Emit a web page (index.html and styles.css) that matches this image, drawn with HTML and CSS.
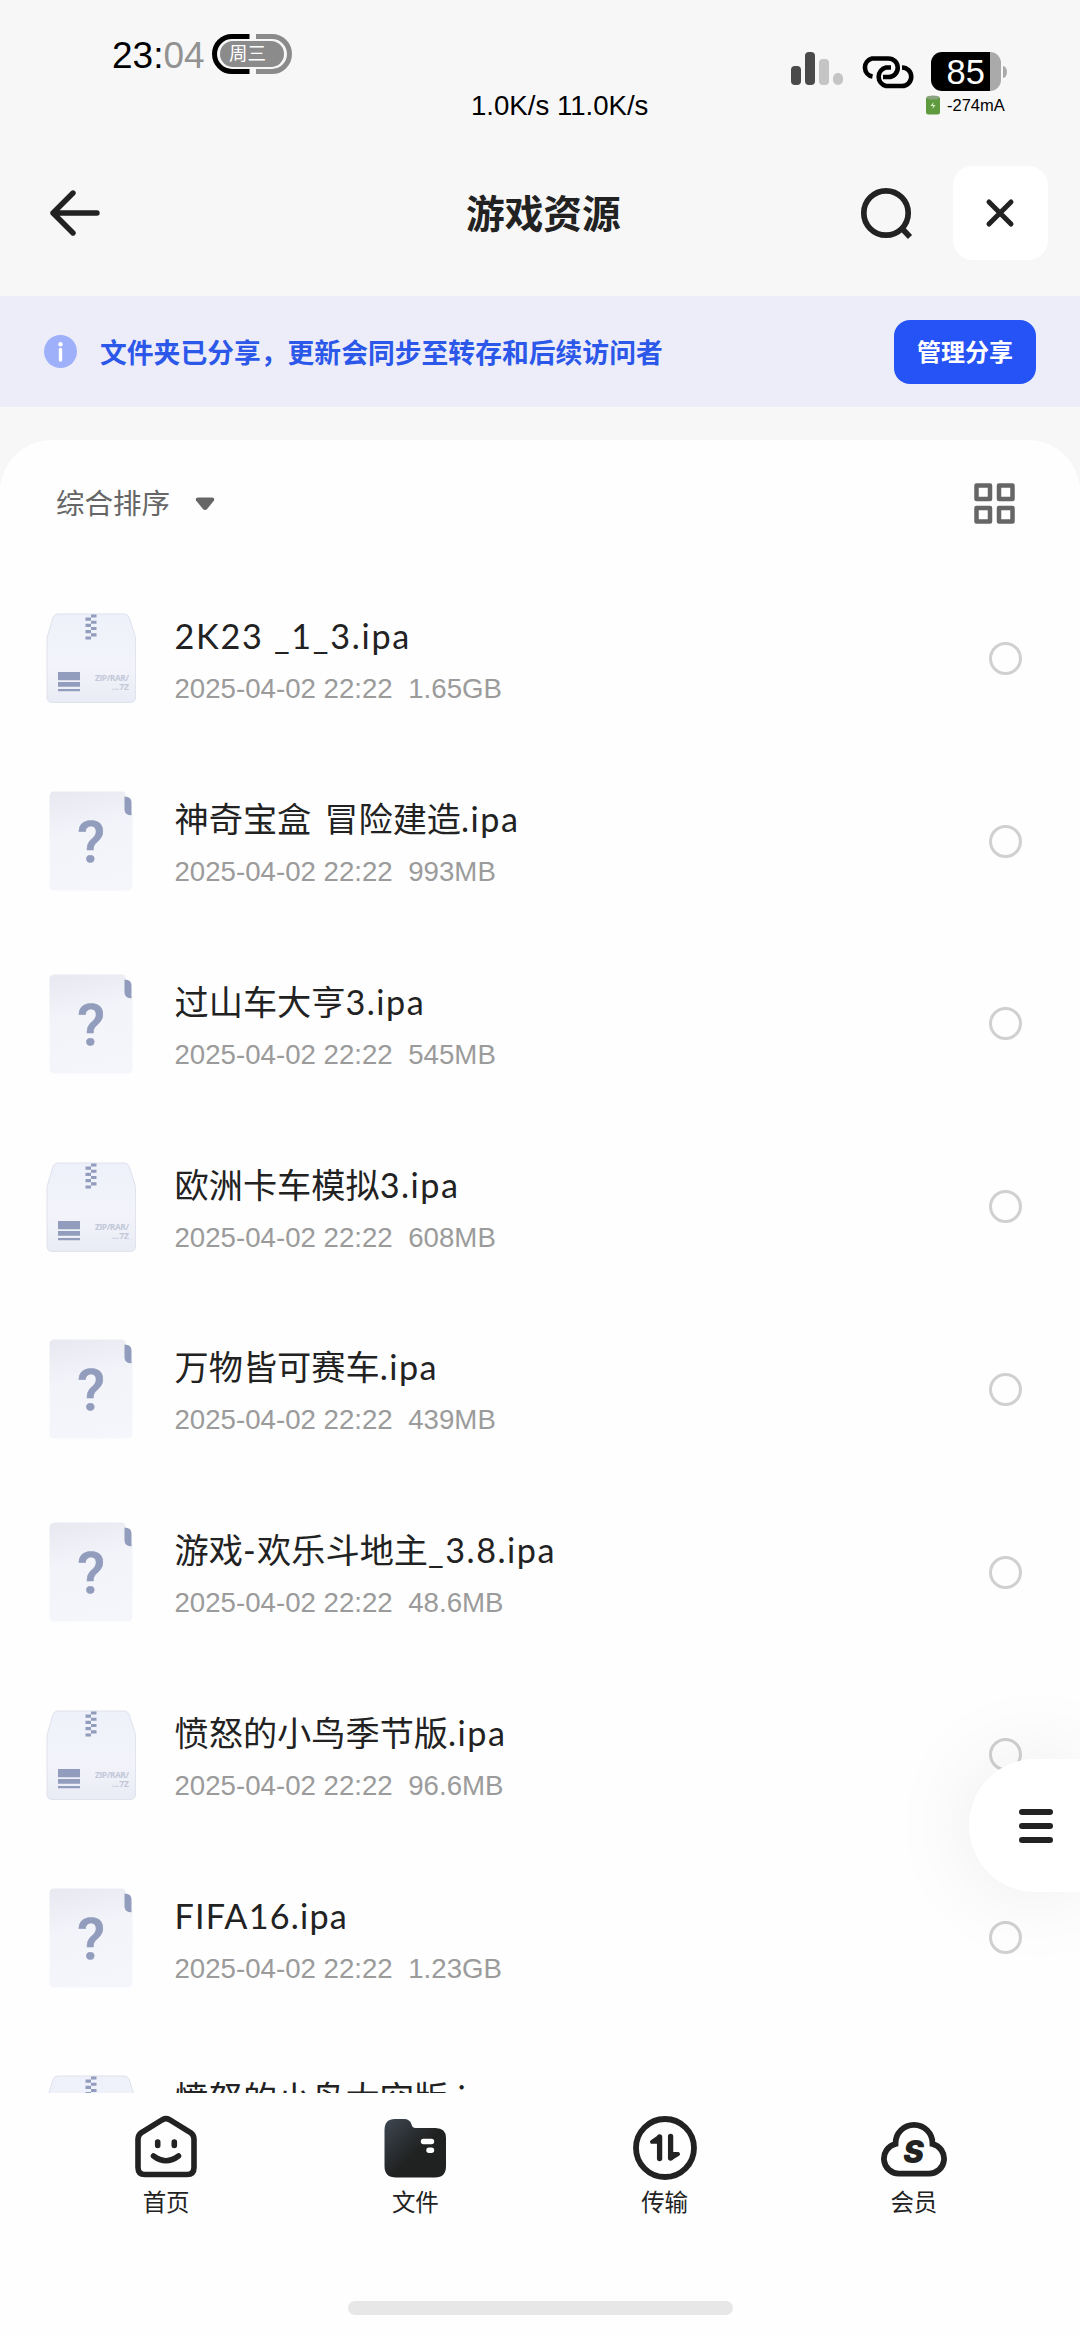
FILE: index.html
```html
<!DOCTYPE html>
<html lang="zh-CN">
<head>
<meta charset="utf-8">
<title>游戏资源</title>
<link rel="stylesheet" href="styles.css">
</head>
<body>
<svg width="0" height="0" class="defs" aria-hidden="true">
  <defs>
    <linearGradient id="paper" x1="0.3" y1="0" x2="0.5" y2="1"><stop offset="0" stop-color="#e9eaf1"/><stop offset=".4" stop-color="#f3f4fa"/><stop offset="1" stop-color="#f4f6fc"/></linearGradient>
    <linearGradient id="box" x1="0" y1="0" x2="0" y2="1"><stop offset="0" stop-color="#eef1fa"/><stop offset=".6" stop-color="#f3f4fa"/><stop offset="1" stop-color="#e9ebf5"/></linearGradient>
    <linearGradient id="folder" x1="0" y1="0.1" x2="0.5" y2="0.6"><stop offset="0" stop-color="#3b444e"/><stop offset="1" stop-color="#202121"/></linearGradient>
    <symbol id="zip" viewBox="0 0 90 90">
      <path d="M12 1h66q4 0 5.300 3.800l5.700 18q.6 2 .6 4.200v57q0 5.500-5.500 5.500H6.500Q1 89.500 1 84V27q0-2.200.6-4.200L6.900 4.700Q8.300 1 12 1z" fill="url(#box)" stroke="#dfe2ec" stroke-width="1"/>
      <path d="M45 1.500h5.500v3H45zM39.500 4.500H45v3.200h-5.500zM45 7.700h5.500v3.100H45zM39.500 10.800H45v3.200h-5.500zM45 14h5.500v3.100H45zM39.500 17.100H45v3.200h-5.500zM45 20.300h5.500v3.100H45zM39.500 23.400H45v3.200h-5.500z" fill="#929cbc"/>
      <path d="M12 59h22v8.300H12zM12 69h22v4.800H12zM12 76h22v2.300H12z" fill="#929cbc"/>
      <text x="83" y="68" text-anchor="end" class="zip-text" textLength="34">ZIP/RAR/</text>
      <text x="83" y="77" text-anchor="end" class="zip-text" textLength="17">...7Z</text>
    </symbol>
    <symbol id="unknown" viewBox="0 0 90 100">
      <path d="M8.500.5H76q3.500 0 3.500 3.500v12q0 6 7 6v72q0 5.500-5.500 5.500H8.500q-5 0-5-5V5.500q0-5 5-5z" fill="url(#paper)"/>
      <path d="M78.500 5.500q7 0 7 6v12.700q-7 0-7-6z" fill="#929cbc"/>
      <text x="45" y="70.500" text-anchor="middle" class="mark">?</text>
    </symbol>
  </defs>
</svg>

<header class="status">
  <div class="clock">23:<span>04</span></div>
  <div class="day">
    <svg class="day-ring" width="80" height="40" viewBox="0 0 80 40"><path d="M37.500 2.500H20a17.500 17.500 0 0 0 0 35h17.500" fill="none" stroke="#000" stroke-width="5"/><path d="M44 2.500h16a17.500 17.500 0 0 1 0 35H44" fill="none" stroke="#8b8b8b" stroke-width="5"/></svg>
    <span class="day-name">周三</span>
  </div>
  <div class="speed">1.0K/s 11.0K/s</div>
  <svg class="signal" width="52" height="33" viewBox="0 0 52 33"><g fill="#4a4a4a"><rect y="14" width="10" height="19" rx="4"/><rect x="14" width="10" height="33" rx="4"/></g><g fill="#c5c5c5"><rect x="28" y="7" width="10" height="26" rx="4"/><rect x="42" y="21" width="10" height="12" rx="5"/></g></svg>
  <svg class="link" width="54" height="33" viewBox="0 0 54 33" fill="none" stroke="#000" stroke-width="4.600"><path d="M12.500 20.500A9.200 9.200 0 0 1 12 2.500h16.500a9.200 9.200 0 0 1 0 18.500H23"/><path d="M31 11.500h-5a9.500 9.500 0 0 0 0 18.500h16a9.200 9.200 0 0 0 0-18.500"/></svg>
  <div class="power">
    <div class="battery"><div class="level">85</div><i></i></div>
    <div class="current"><svg width="14" height="20" viewBox="0 0 14 20"><rect y="1.500" width="14" height="18" rx="2.500" fill="#5f9a3f"/><ellipse cx="7" cy="2.500" rx="6.500" ry="2" fill="#8ba380"/><path d="M7.500 7 4.500 11H7l-.5 3 3-4H7z" fill="#d8ecc9"/></svg><span>-274mA</span></div>
  </div>
</header>

<nav class="titlebar">
  <svg class="back" width="52" height="46" viewBox="0 0 52 46" fill="none" stroke="#222" stroke-width="5.400" stroke-linecap="round" stroke-linejoin="round"><path d="M24 3 4 23l20 20M4 23h44"/></svg>
  <h1>游戏资源</h1>
  <svg class="search" width="54" height="54" viewBox="0 0 54 54" fill="none" stroke="#222" stroke-width="5.700"><circle cx="26" cy="27" r="22.200"/><path d="m42 42.500 8 8.500"/></svg>
  <button class="close"><svg width="30" height="30" viewBox="0 0 30 30" stroke="#222" stroke-width="5" stroke-linecap="round"><path d="m4 4 22 22M26 4 4 26"/></svg></button>
</nav>

<section class="banner">
  <svg width="33" height="33" viewBox="0 0 33 33"><circle cx="16.500" cy="16.500" r="16.500" fill="#9db0f9"/><circle cx="16.500" cy="9.300" r="2.200" fill="#fff"/><path d="M16.500 14.500V25" stroke="#fff" stroke-width="3.400" stroke-linecap="round"/></svg>
  <p>文件夹已分享，更新会同步至转存和后续访问者</p>
  <button class="manage">管理分享</button>
</section>

<main class="panel">
  <div class="toolbar">
    <span class="sort">综合排序</span>
    <svg width="20" height="14" viewBox="0 0 20 14"><path d="M3 .5h14q3 0 2 3l-6.500 8q-2.500 3-5 0L1 3.500Q0 .5 3 .5z" fill="#666"/></svg>
    <svg class="grid" width="41" height="41" viewBox="0 0 41 41" fill="none" stroke="#666" stroke-width="4.500" stroke-linejoin="round"><path d="M2.500 2.500h13.500v13.500H2.500zM25 2.500h13.500v13.500H25zM2.500 25h13.500v13.500H2.500zM25 25h13.500v13.500H25z"/></svg>
  </div>
  <ul class="files">
    <li><svg class="icon-zip"><use href="#zip"/></svg><div class="info"><b class="n1">2K23 _1_3.ipa</b><small>2025-04-02 22:22<em>1.65GB</em></small></div><i class="radio"></i></li>
    <li><svg class="icon-file"><use href="#unknown"/></svg><div class="info"><b>神奇宝盒<s></s>冒险建造<span>.ipa</span></b><small>2025-04-02 22:22<em>993MB</em></small></div><i class="radio"></i></li>
    <li><svg class="icon-file"><use href="#unknown"/></svg><div class="info"><b>过山车大亨<span>3.ipa</span></b><small>2025-04-02 22:22<em>545MB</em></small></div><i class="radio"></i></li>
    <li><svg class="icon-zip"><use href="#zip"/></svg><div class="info"><b>欧洲卡车模拟<span>3.ipa</span></b><small>2025-04-02 22:22<em>608MB</em></small></div><i class="radio"></i></li>
    <li><svg class="icon-file"><use href="#unknown"/></svg><div class="info"><b>万物皆可赛车<span>.ipa</span></b><small>2025-04-02 22:22<em>439MB</em></small></div><i class="radio"></i></li>
    <li><svg class="icon-file"><use href="#unknown"/></svg><div class="info"><b>游戏<span>-</span>欢乐斗地主<span>_3.8.ipa</span></b><small>2025-04-02 22:22<em>48.6MB</em></small></div><i class="radio"></i></li>
    <li><svg class="icon-zip"><use href="#zip"/></svg><div class="info"><b>愤怒的小鸟季节版<span>.ipa</span></b><small>2025-04-02 22:22<em>96.6MB</em></small></div><i class="radio"></i></li>
    <li><svg class="icon-file"><use href="#unknown"/></svg><div class="info"><b><span class="tight">FIFA16.ipa</span></b><small>2025-04-02 22:22<em>1.23GB</em></small></div><i class="radio"></i></li>
    <li><svg class="icon-zip"><use href="#zip"/></svg><div class="info"><b>愤怒的小鸟太空版<span>.ipa</span></b></div></li>
  </ul>
</main>

<footer class="tabs">
  <a><svg width="66" height="66" viewBox="0 0 66 66" fill="none" stroke="#222" stroke-width="5.600"><path d="M29.500 5.700 8.500 18.500Q5 21 5 25v28.500q0 7 7 7h42q7 0 7-7V25q0-4-3.500-6.500L36.500 5.700q-3.500-2-7 0z"/><path d="M24.700 28v3.500M41.300 28v3.500M20.500 42q12.500 9.500 25 0" stroke-linecap="round"/></svg>首页</a>
  <a><svg width="66" height="66" viewBox="0 0 66 66"><path d="M13 5h9q6 0 7.500 5.500 1 3.500 4 3.500h20Q64 14 64 24v28q0 11.500-11 11.500H14Q2.500 63.500 2.500 52V16Q2.500 5 13 5z" fill="url(#folder)"/><path d="M41.500 27.500h8M47 36.300h2.500" stroke="#fff" stroke-width="5.400" stroke-linecap="round"/></svg>文件</a>
  <a><svg width="66" height="66" viewBox="0 0 66 66" fill="none" stroke="#222"><circle cx="33" cy="34" r="29" stroke-width="5.800"/><path d="M27.600 23v21.500" stroke-width="5.300" stroke-linecap="round"/><path d="m26.500 23.500-6.500 4.300h6M39.500 44l6.500-4h-6" stroke-width="4" stroke-linejoin="round" fill="#222"/><path d="M38.600 22.500V44" stroke-width="5.300" stroke-linecap="round"/></svg>传输</a>
  <a><svg width="66" height="66" viewBox="0 0 66 66"><path d="M14.500 30v-.6a18.500 18.500 0 0 1 37 0v.6A15 15 0 0 1 48.100 59.600H17.900A15 15 0 0 1 14.500 30z" fill="none" stroke="#222" stroke-width="5.800"/><text x="32.500" y="48.500" class="brand" text-anchor="middle">S</text></svg>会员</a>
</footer>
<div class="home"><div class="home-bar"></div></div>
<button class="drawer"><i></i><i></i><i></i></button>
</body>
</html>
```
FILE: styles.css
```css
* { box-sizing: border-box; }
body {
  margin: 0; width: 1080px; height: 2337px; overflow: hidden; position: relative;
  display: flex; flex-direction: column; background: #f7f7f7; color: #222;
  font-family: "Liberation Sans", "Noto Sans CJK SC", sans-serif;
}
svg { display: block; flex: none; }
.defs { position: absolute; }
button { border: 0; padding: 0; font: inherit; display: flex; align-items: center; justify-content: center; }
.status { height: 166px; padding-left: 112px; display: flex; align-items: flex-start; flex: none; color: #000; }
.clock { width: 100px; margin-top: 35px; font-size: 37px; line-height: 42px; }
.clock span { color: #929292; }
.day { width: 80px; height: 40px; margin-top: 34px; display: grid; place-items: center; }
.day > * { grid-area: 1 / 1; }
.day-name { width: 64px; height: 26px; padding-left: 9px; border-radius: 13px; background: #8b8b8b; color: #fff; font-size: 18.500px; line-height: 26px; }
.speed { width: 320px; padding-left: 179px; margin-top: 90px; font-size: 27.600px; line-height: 32px; white-space: nowrap; }
.signal { margin: 52px 0 0 179px; }
.link { margin: 56px 0 0 17px; }
.power { margin: 52px 0 0 17px; }
.battery { display: flex; align-items: center; gap: 2px; }
.level { width: 70px; height: 39px; padding-left: 15.500px; border-radius: 11px; background: linear-gradient(90deg, #000 59px, #aaa 59px); color: #fff; font-size: 34.500px; line-height: 40px; }
.battery i { width: 4px; height: 12px; border-radius: 0 4px 4px 0 / 0 6px 6px 0; background: #aaa; }
.current { display: flex; gap: 7px; align-items: center; margin: 4px 0 0 -5px; font-size: 16.500px; line-height: 20px; }
.titlebar { height: 130px; flex: none; display: flex; align-items: flex-start; padding-left: 49px; }
.back { margin-top: 24px; }
h1 { margin: 21px 0 0 365px; width: 394px; font-size: 38.700px; line-height: 56px; font-weight: 700; }
.search { margin-top: 20px; }
.close { width: 95px; height: 94px; margin-left: 38.500px; background: #fff; border-radius: 20px; }
.banner { height: 111px; flex: none; display: flex; align-items: center; padding: 0 44px; background: #ecedf9; }
.banner p { margin: 4px 0 0 23px; flex: 1; font-size: 26.800px; line-height: 36px; font-weight: 700; color: #2c58ea; white-space: nowrap; }
.manage { width: 142px; height: 64px; padding-bottom: 2px; border-radius: 16px; background: #2653f5; color: #fff; font-size: 24px; font-weight: 700; }
.panel { margin-top: 33px; height: 1653px; flex: none; display: flex; flex-direction: column; background: #fefefe; border-radius: 52px 52px 0 0; overflow: hidden; }
.toolbar { height: 127px; flex: none; display: flex; align-items: center; padding: 0 65px 0 56px; }
.sort { font-size: 28.500px; line-height: 40px; color: #666; margin-right: 25px; }
.grid { margin-left: auto; }
.files { list-style: none; margin: 0; padding: 0; }
.files li { height: 182.760px; display: flex; align-items: center; padding: 0 58px 0 46px; }
.icon-zip, .icon-file { width: 90px; height: 90px; }
.icon-file { height: 100px; }
.info { flex: 1; margin-left: 38.500px; height: 104px; display: flex; flex-direction: column; }
.info b { flex: none; height: 60px; font: 400 34.200px/56px "Noto Sans CJK SC", sans-serif; white-space: nowrap; }
.info b span, .info .n1 { font-family: Lato, "Noto Sans CJK SC", sans-serif; letter-spacing: 1.500px; }
.info .n1 { line-height: 60px; letter-spacing: 1.700px; }
.info b span { line-height: 1px; }
.info .tight { letter-spacing: 1.200px; }
.info s { display: inline-block; width: 13px; }
.info small { flex: none; font-size: 27.650px; line-height: 46px; color: #9b9b9b; }
.info em { font-style: normal; margin-left: 15.500px; }
.radio { width: 33px; height: 33px; border: 3px solid #d0d0d0; border-radius: 50%; }
.zip-text { font: 700 8.500px "Open Sans", sans-serif; fill: #c3c8d9; }
.mark { font: 500 57px Roboto, sans-serif; fill: #929cbc; stroke: #929cbc; stroke-width: .6px; }
.tabs { height: 208px; flex: none; padding: 21px 41.500px 0; display: flex; background: #fefefe; }
.tabs a { flex: 1; display: flex; flex-direction: column; align-items: center; font-size: 23.500px; line-height: 46px; }
.brand { font: italic 900 31px Inter, sans-serif; fill: #222; }
.home { height: 36px; flex: none; background: #fefefe; padding: 0 347.500px 22px 348px; }
.home-bar { height: 14px; border-radius: 7px; background: #e7e7e7; }
.drawer { position: absolute; right: 0; top: 1759px; width: 111px; height: 133px; border-radius: 66px 0 0 66px; background: #fff; box-shadow: 0 0 90px rgba(0, 0, 0, .08); flex-direction: column; gap: 8px; padding-left: 23px; }
.drawer i { width: 34px; height: 6px; border-radius: 3px; background: #222; }
```
